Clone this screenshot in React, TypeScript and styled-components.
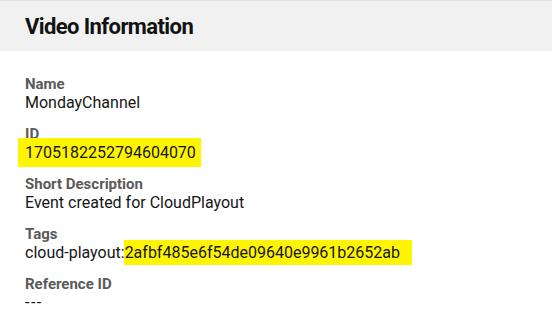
import React from "react";
import styled, { createGlobalStyle } from "styled-components";

const Global = createGlobalStyle`
  html, body { margin: 0; padding: 0; background: #ffffff; }
  body { font-family: "Roboto", "Liberation Sans", sans-serif; }
`;

const Page = styled.div`
  width: 552px;
  height: 314px;
  overflow: hidden;
  background: #ffffff;
`;

const Header = styled.header`
  height: 50px;
  border-top: 1px solid #e2e2e2;
  background: #f1f1f1;
  display: flex;
  align-items: center;
  padding: 0 25px;
`;

const Title = styled.h1`
  margin: 0;
  font-size: 22px;
  font-weight: 700;
  color: #121212;
  letter-spacing: -0.6px;
`;

const Body = styled.div`
  display: flex;
  flex-direction: column;
  padding: 25px 25px 0;
`;

const Field = styled.div`
  display: flex;
  flex-direction: column;
  height: 50px;
`;

const Label = styled.div`
  font-size: 15px;
  line-height: 17px;
  font-weight: 700;
  color: #5a5a5a;
`;

const Value = styled.div<{ $spaced?: boolean }>`
  font-size: 16px;
  line-height: 20px;
  color: #161616;
  letter-spacing: ${(p) => (p.$spaced ? "1.5px" : "0")};
`;

const Mark = styled.span<{ $padLeft: number; $padRight: number; $padTop: number; $padBottom: number }>`
  background: #fff500;
  padding: ${(p) => p.$padTop}px ${(p) => p.$padRight}px ${(p) => p.$padBottom}px ${(p) => p.$padLeft}px;
  margin-left: ${(p) => -p.$padLeft}px;
`;

export default function App() {
  return (
    <Page>
      <Global />
      <Header>
        <Title>Video Information</Title>
      </Header>
      <Body>
        <Field>
          <Label>Name</Label>
          <Value>MondayChannel</Value>
        </Field>
        <Field>
          <Label>ID</Label>
          <Value>
            <Mark $padLeft={7} $padRight={5} $padTop={5} $padBottom={5}>1705182252794604070</Mark>
          </Value>
        </Field>
        <Field>
          <Label>Short Description</Label>
          <Value>Event created for CloudPlayout</Value>
        </Field>
        <Field>
          <Label>Tags</Label>
          <Value>
            cloud-playout:<Mark $padLeft={1} $padRight={12} $padTop={3} $padBottom={3}>2afbf485e6f54de09640e9961b2652ab</Mark>
          </Value>
        </Field>
        <Field>
          <Label>Reference ID</Label>
          <Value $spaced>---</Value>
        </Field>
      </Body>
    </Page>
  );
}
